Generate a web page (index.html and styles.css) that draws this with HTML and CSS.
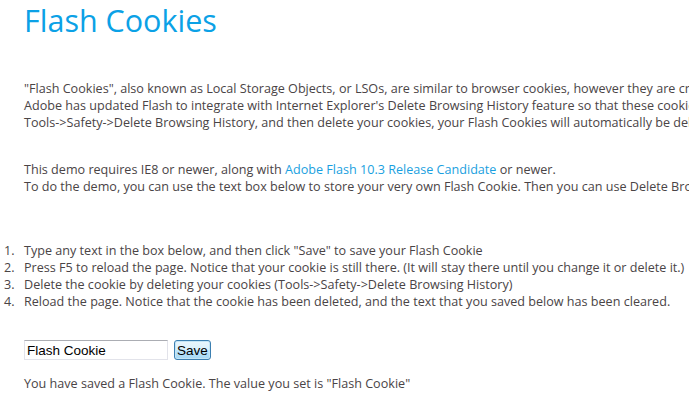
FILE: index.html
```html
<!DOCTYPE html>
<html>
<head>
<meta charset="utf-8">
<title>Flash Cookies</title>
<link rel="stylesheet" href="styles.css">
</head>
<body>
<div class="page">
  <h1 class="title">Flash Cookies</h1>
  <p class="intro">"Flash Cookies", also known as Local Storage Objects, or LSOs, are similar to browser cookies, however they are created and managed by Adobe Flash.<br>Adobe has updated Flash to integrate with Internet Explorer's Delete Browsing History feature so that these cookies can be deleted from within the browser.<br>Tools-&gt;Safety-&gt;Delete Browsing History, and then delete your cookies, your Flash Cookies will automatically be deleted as well.</p>
  <p class="req">This demo requires IE8 or newer, along with <a href="#" class="link">Adobe Flash 10.3 Release Candidate</a> or newer.<br>To do the demo, you can use the text box below to store your very own Flash Cookie. Then you can use Delete Browsing History to remove it.</p>
  <ol class="steps">
    <li>Type any text in the box below, and then click "Save" to save your Flash Cookie</li>
    <li>Press F5 to reload the page. Notice that your cookie is still there. (It will stay there until you change it or delete it.)</li>
    <li>Delete the cookie by deleting your cookies (Tools-&gt;Safety-&gt;Delete Browsing History)</li>
    <li>Reload the page. Notice that the cookie has been deleted, and the text that you saved below has been cleared.</li>
  </ol>
  <div class="form">
    <input class="field" type="text" value="Flash Cookie">
    <button class="save" type="button">Save</button>
  </div>
  <p class="status">You have saved a Flash Cookie. The value you set is "Flash Cookie"</p>
</div>
</body>
</html>
```
FILE: styles.css
```css
html, body {
  margin: 0;
  padding: 0;
  overflow: hidden;
  background: #ffffff;
}
.page {
  padding-left: 24px;
  font-family: "Open Sans", "Noto Sans", sans-serif;
  font-size: 12.6px;
  line-height: 17px;
  color: #4a4446;
  white-space: nowrap;
}
.title {
  margin: 0;
  font-family: "Open Sans", sans-serif;
  font-weight: 400;
  font-size: 30.5px;
  line-height: 40px;
  color: #0ba1e6;
}
.intro {
  margin: 40px 0 0 0;
}
.req {
  margin: 30px 0 0 0;
}
.link {
  color: #1a9fe0;
  text-decoration: none;
}
.steps {
  margin: 47px 0 0 0;
  padding: 0;
  list-style: none;
  counter-reset: step;
}
.steps li {
  counter-increment: step;
  display: flex;
  margin-left: -20px;
}
.steps li::before {
  content: counter(step) ".";
  flex: 0 0 20px;
}
.form {
  margin-top: 30px;
  display: flex;
  align-items: center;
  gap: 6px;
}
.field {
  box-sizing: border-box;
  width: 144px;
  height: 20px;
  margin: 0;
  padding: 1px 2px;
  border: 1px solid #e2e3ea;
  border-top-color: #abadb3;
  font-family: "Liberation Sans", Arial, sans-serif;
  font-size: 13.5px;
  color: #000;
  outline: none;
}
.save {
  box-sizing: border-box;
  height: 20px;
  width: 37px;
  margin: 0;
  padding: 0;
  border: 1px solid #3c7fb1;
  border-radius: 3px;
  background: linear-gradient(#eaf6fd, #d9f0fc 50%, #bee6fd 51%, #a7d9f5);
  box-shadow: inset 0 0 0 1px #c4e5f6;
  font-family: "Liberation Sans", Arial, sans-serif;
  font-size: 13.5px;
  color: #000;
}
.status {
  margin: 15px 0 0 0;
}
```
